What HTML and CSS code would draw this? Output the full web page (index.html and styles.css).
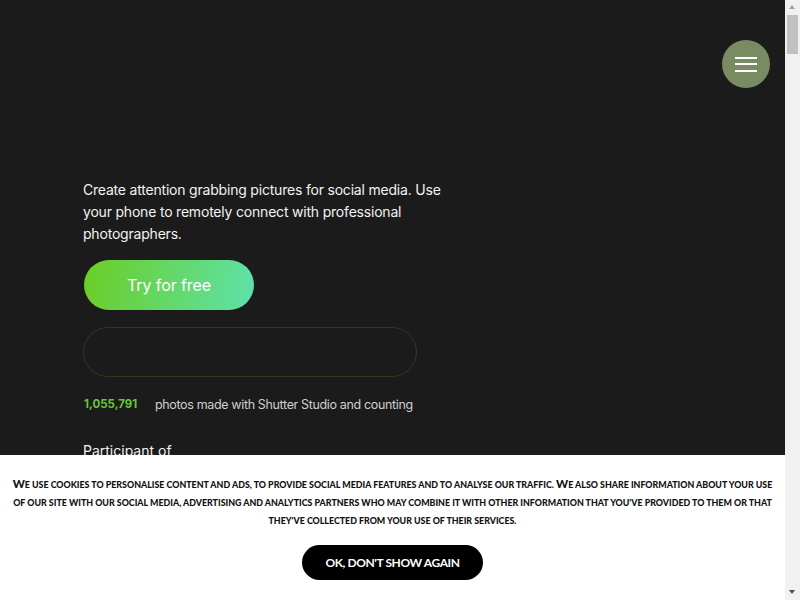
FILE: index.html
```html
<!DOCTYPE html>
<html lang="en">
<head>
<meta charset="utf-8">
<title>Shutter Studio</title>
<link rel="stylesheet" href="styles.css">
</head>
<body>
<button class="menu-btn" aria-label="Menu">
  <span class="bar"></span><span class="bar"></span><span class="bar"></span>
</button>
<main class="hero">
  <p class="lead">Create attention grabbing pictures for social media. Use your phone to remotely connect with professional photographers.</p>
  <a class="cta" href="#">Try for free</a>
  <div class="outline-pill"></div>
  <div class="counter"><span class="count">1,055,791</span><span class="count-text">photos made with Shutter Studio and counting</span></div>
  <p class="participant">Participant of</p>
</main>
<div class="cookie">
  <p class="cookie-text"><span class="cap">W</span>e use cookies to personalise content and ads, to provide social media features and to analyse our traffic. <span class="cap">W</span>e also share information about your use of our site with our social media, advertising and analytics partners who may combine it with other information that you've provided to them or that they've collected from your use of their services.</p>
  <button class="cookie-btn">OK, DON'T SHOW AGAIN</button>
</div>
<div class="scrollbar" aria-hidden="true">
  <span class="arrow up"></span>
  <span class="thumb"></span>
  <span class="arrow down"></span>
</div>
</body>
</html>
```

FILE: styles.css
```css
html, body {
  margin: 0;
  padding: 0;
}
body {
  background: #1b1b1b;
  color: #f2f2f2;
  font-family: Inter, "Noto Sans", sans-serif;
  height: 600px;
  overflow: hidden;
}
.menu-btn {
  position: fixed;
  top: 40px;
  right: 30px;
  width: 48px;
  height: 48px;
  border-radius: 50%;
  border: 0;
  padding: 0;
  background: #798b62;
  display: flex;
  flex-direction: column;
  align-items: center;
  justify-content: center;
  gap: 4.5px;
  cursor: pointer;
}
.menu-btn .bar {
  display: block;
  width: 22px;
  height: 2px;
  background: #fff;
}
.hero {
  padding: 179px 0 0 83px;
  width: 372px;
}
.lead {
  margin: 0;
  font-size: 14px;
  line-height: 22px;
  letter-spacing: -0.2px;
}
.cta {
  margin: 15px 0 0 1px;
  width: 170px;
  height: 50px;
  border-radius: 25px;
  background: linear-gradient(100deg, #6bcd24 0%, #5ee2ab 100%);
  color: #fff;
  text-decoration: none;
  font-size: 16px;
  letter-spacing: -0.1px;
  display: flex;
  align-items: center;
  justify-content: center;
}
.outline-pill {
  margin-top: 17px;
  width: 332px;
  height: 48px;
  border: 1px solid #2c3d1f;
  border-radius: 25px;
}
.counter {
  margin-top: 17px;
  display: flex;
  align-items: center;
  height: 20px;
  font-size: 12.5px;
  width: 400px;
}
.count {
  color: #66c43d;
  font-weight: 700;
  font-size: 11.5px;
  width: 71px;
  padding-left: 1px;
}
.count-text {
  color: #cfcfcf;
  letter-spacing: -0.35px;
}
.participant {
  margin: 26px 0 0;
  font-size: 14px;
  line-height: 22px;
}
.cookie {
  position: fixed;
  left: 0;
  right: 15px;
  bottom: 0;
  height: 145px;
  box-sizing: border-box;
  background: #fff;
  padding: 21px 10px 0;
  display: flex;
  flex-direction: column;
  align-items: center;
}
.cookie-text {
  margin: 0;
  max-width: 765px;
  color: #111;
  font-family: Lato, "Open Sans", sans-serif;
  font-weight: 900;
  text-transform: uppercase;
  font-size: 8.85px;
  line-height: 18px;
  text-align: center;
}
.cookie-text .cap {
  font-size: 11.5px;
  line-height: 1;
}
.cookie-btn {
  margin-top: 15px;
  width: 181px;
  height: 35px;
  border-radius: 18px;
  border: 0;
  background: #000;
  color: #fff;
  font-family: Lato, "Open Sans", sans-serif;
  font-weight: 700;
  font-size: 12px;
  letter-spacing: -0.4px;
  cursor: pointer;
}
.scrollbar {
  position: fixed;
  top: 0;
  right: 0;
  width: 15px;
  height: 600px;
  background: #f1f1f1;
}
.scrollbar .thumb {
  position: absolute;
  left: 2px;
  top: 15px;
  width: 11px;
  height: 39px;
  background: #c1c1c1;
}
.scrollbar .arrow {
  position: absolute;
  left: 4px;
  width: 0;
  height: 0;
  border-left: 3.5px solid transparent;
  border-right: 3.5px solid transparent;
}
.scrollbar .up {
  top: 5px;
  border-bottom: 4px solid #a3a3a3;
}
.scrollbar .down {
  bottom: 6px;
  border-top: 4px solid #505050;
}
```
